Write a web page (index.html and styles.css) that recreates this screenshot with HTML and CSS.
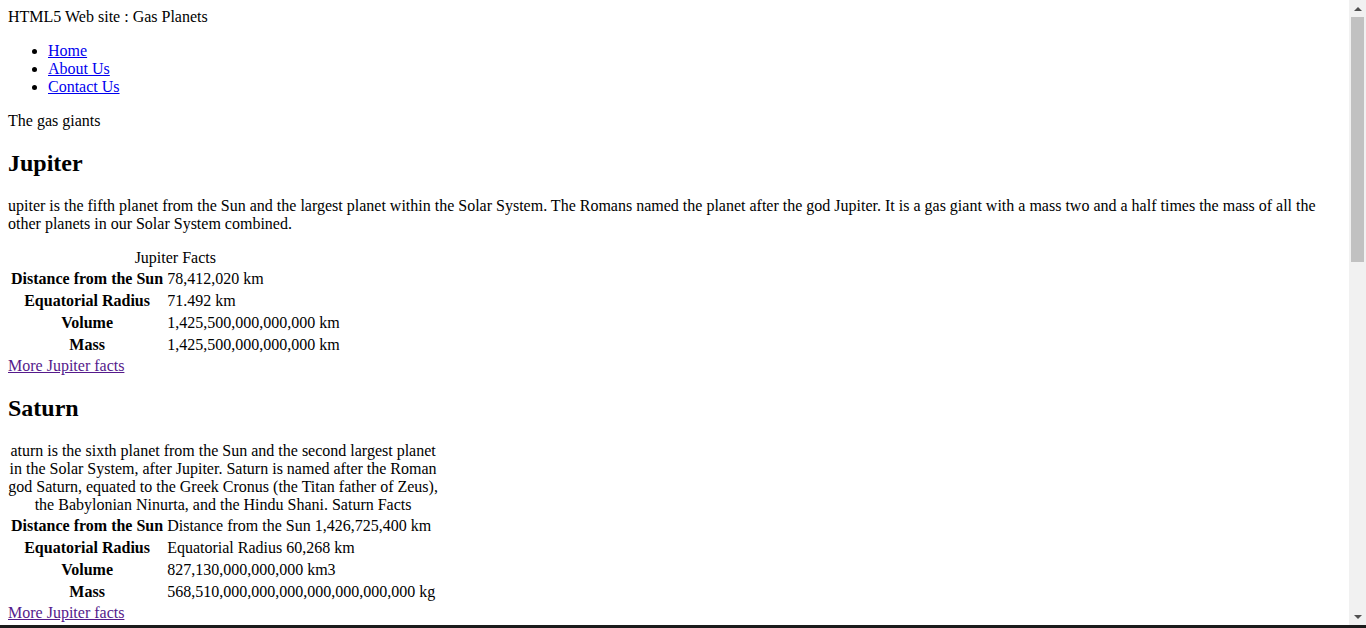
FILE: index.html
```html
<!DOCTYPE html>
<html lang="en">
<head>
<meta charset="utf-8">
<title>Gas Planets</title>
<link rel="stylesheet" href="styles.css">
</head>
<body>
<div class="screen">
  <div class="viewport">
    <div class="content">
      <header class="site-title">HTML5 Web site : Gas Planets</header>
      <nav>
        <ul class="menu">
          <li><a class="link" href="#">Home</a></li>
          <li><a class="link" href="#">About Us</a></li>
          <li><a class="link" href="#">Contact Us</a></li>
        </ul>
      </nav>
      <p class="intro">The gas giants</p>
      <section>
        <h2 class="planet">Jupiter</h2>
        <p class="text">upiter is the fifth planet from the Sun and the largest planet within the Solar System. The Romans named the planet after the god Jupiter. It is a gas giant with a mass two and a half times the mass of all the other planets in our Solar System combined.</p>
        <table class="facts">
          <caption>Jupiter Facts</caption>
          <tr><th>Distance from the Sun</th><td>78,412,020 km</td></tr>
          <tr><th>Equatorial Radius</th><td>71.492 km</td></tr>
          <tr><th>Volume</th><td>1,425,500,000,000,000 km</td></tr>
          <tr><th>Mass</th><td>1,425,500,000,000,000 km</td></tr>
        </table>
        <a class="visited" href="#">More Jupiter facts</a>
      </section>
      <section>
        <h2 class="planet">Saturn</h2>
        <table class="facts">
          <caption>aturn is the sixth planet from the Sun and the second largest planet in the Solar System, after Jupiter. Saturn is named after the Roman god Saturn, equated to the Greek Cronus (the Titan father of Zeus), the Babylonian Ninurta, and the Hindu Shani. Saturn Facts</caption>
          <tr><th>Distance from the Sun</th><td>Distance from the Sun 1,426,725,400 km</td></tr>
          <tr><th>Equatorial Radius</th><td>Equatorial Radius 60,268 km</td></tr>
          <tr><th>Volume</th><td>827,130,000,000,000 km3</td></tr>
          <tr><th>Mass</th><td>568,510,000,000,000,000,000,000,000 kg</td></tr>
        </table>
        <a class="visited" href="#">More Jupiter facts</a>
      </section>
    </div>
    <div class="scrollbar">
      <div class="arrow up"></div>
      <div class="track">
        <div class="thumb"></div>
      </div>
      <div class="arrow down"></div>
    </div>
  </div>
  <div class="taskbar"></div>
</div>
</body>
</html>
```
FILE: styles.css
```css
html, body {
  margin: 0;
  padding: 0;
  overflow: hidden;
  background: #fff;
}

.screen {
  display: flex;
  flex-direction: column;
  width: 1366px;
  height: 628px;
}

.viewport {
  display: flex;
  flex: 1;
  min-height: 0;
}

.content {
  flex: 1;
  min-width: 0;
  padding: 8px;
  overflow: hidden;
  font-family: "Liberation Serif", "Times New Roman", serif;
  font-size: 16px;
  line-height: 18px;
  color: #000;
}

.site-title {
  display: block;
}

.menu {
  margin: 16px 0;
  padding-left: 40px;
  list-style: disc;
}

.link {
  color: #0000ee;
  text-decoration: underline;
}

.visited {
  color: #551a8b;
  text-decoration: underline;
}

.intro {
  margin: 16px 0;
}

.planet {
  font-size: 24px;
  line-height: 27px;
  font-weight: bold;
  margin: 19.92px 0;
}

.text {
  margin: 16px 0;
}

.facts {
  border-collapse: separate;
  border-spacing: 2px;
  margin: 0;
}

.facts caption {
  text-align: center;
  padding: 0;
}

.facts th {
  font-weight: bold;
  text-align: center;
  vertical-align: middle;
  padding: 1px;
}

.facts td {
  text-align: left;
  vertical-align: middle;
  padding: 1px;
}

.scrollbar {
  width: 17px;
  background: #f1f1f1;
  display: flex;
  flex-direction: column;
}

.arrow {
  height: 17px;
  display: flex;
  align-items: center;
  justify-content: center;
}

.arrow::before {
  content: "";
  width: 0;
  height: 0;
  border-left: 4px solid transparent;
  border-right: 4px solid transparent;
}

.up::before {
  border-bottom: 4px solid #505050;
}

.down::before {
  border-top: 4px solid #505050;
}

.track {
  flex: 1;
  padding: 0 2px;
}

.thumb {
  height: 245px;
  background: #c1c1c1;
}

.taskbar {
  height: 3px;
  background: #1b1b1b;
}
```
